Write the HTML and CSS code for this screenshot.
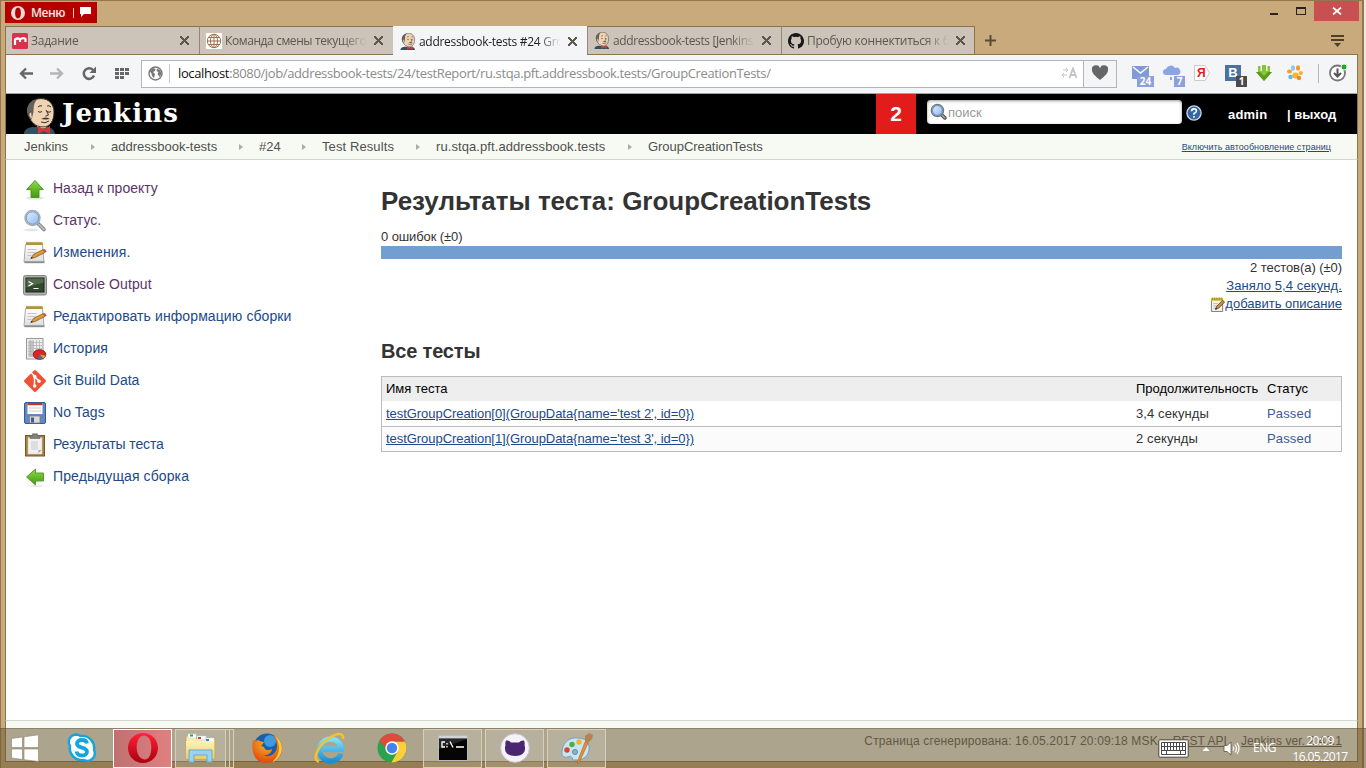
FILE: index.html
```html
<!DOCTYPE html>
<html lang="ru">
<head>
<meta charset="utf-8">
<title>GroupCreationTests [Jenkins]</title>
<link rel="stylesheet" href="styles.css">
</head>
<body>
<svg class="defs" width="0" height="0">
  <defs>
    <linearGradient id="green" x1="0" y1="0" x2="0" y2="1"><stop offset="0" stop-color="#8fdc45"/><stop offset="1" stop-color="#3f9a10"/></linearGradient>
    <linearGradient id="paper" x1="0" y1="0" x2="0" y2="1"><stop offset="0" stop-color="#fff"/><stop offset="1" stop-color="#dcdcdc"/></linearGradient>
    <linearGradient id="lens" x1="0" y1="0" x2="1" y2="1"><stop offset="0" stop-color="#eaf4ff"/><stop offset="1" stop-color="#86b4ea"/></linearGradient>
    <linearGradient id="opera" x1="0" y1="0" x2="0" y2="1"><stop offset="0" stop-color="#ff2238"/><stop offset="1" stop-color="#a9000f"/></linearGradient>
    <linearGradient id="ie" x1="0" y1="0" x2="0" y2="1"><stop offset="0" stop-color="#7fe0fb"/><stop offset="1" stop-color="#1b8fd6"/></linearGradient>
    <linearGradient id="folder" x1="0" y1="0" x2="0" y2="1"><stop offset="0" stop-color="#fff3ba"/><stop offset="1" stop-color="#eccb64"/></linearGradient>
    <radialGradient id="fox" cx=".5" cy=".3" r=".7"><stop offset="0" stop-color="#ffb627"/><stop offset="1" stop-color="#dc4a10"/></radialGradient>
    <symbol id="butler" viewBox="0 0 32 36">
      <path d="M0 36c0-4 3-6 8-7h16c4 1 6 3 7 7z" fill="#335061"/>
      <path d="M9 25l7 6 5-1 5-4-2-4H11z" fill="#fff"/>
      <path d="M4 14C3 5 10 .6 17 .6c8 0 13 6 13 13.400 0 9-4 15-11 15C11 29 5 23 4 14z" fill="#efd3b3" stroke="#33302c" stroke-width="1"/>
      <path d="M4 18C1 9 5 3 13 1.500 9 6 10 10 9.500 14L8 20c-2 0-3-1-4-2z" fill="#67625f"/>
      <path d="M7 14c-3 0-3 6 1 7" fill="#efd3b3" stroke="#33302c" stroke-width=".8"/>
      <path d="M14 9q2-2 4-1M23 8q2-1 4 1M14 13.500q2 1.500 4 0M23 13.500q2 1.500 4 0M22 12l2.500 5-3 1.200M17 24q4 2 8-1" fill="none" stroke="#33302c" stroke-width="1"/>
      <path d="M17 21q5-3 9 0l-4 .6z" fill="#3a322c"/>
      <path d="M14 28l6 3 6-3v8l-6-3-6 3z" fill="#d33833"/>
    </symbol>
    <symbol id="i-up" viewBox="0 0 24 24"><ellipse cx="12" cy="21" rx="9" ry="1.600" fill="#e4e4e4"/><path d="M12 3.500l8.300 9H16V20.500H8v-8H3.700z" fill="url(#green)" stroke="#4a9a22"/></symbol>
    <symbol id="i-left" viewBox="0 0 24 24"><ellipse cx="13" cy="21" rx="8" ry="1.200" fill="#eaeaea"/><path d="M3.500 12l9-8v4H20.500v8h-8v4z" fill="url(#green)" stroke="#5a9a35"/></symbol>
    <symbol id="i-search" viewBox="0 0 24 24"><ellipse cx="8" cy="21" rx="7" ry="1.500" fill="#e6e6e6"/><path d="M15 14.500l6 6" stroke="#777" stroke-width="3.600" stroke-linecap="round"/><path d="M16 15.500l5 5" stroke="#bbb" stroke-width="2" stroke-linecap="round"/><circle cx="9.500" cy="9" r="7.500" fill="url(#lens)" stroke="#a9adb3" stroke-width="1.500"/><circle cx="9.500" cy="9" r="6.200" fill="none" stroke="#6f97cb" stroke-width=".9"/></symbol>
    <symbol id="i-lens" viewBox="0 0 16 16"><path d="M10.500 10.500l3.500 3.500" stroke="#555" stroke-width="3.400" stroke-linecap="round"/><path d="M11.500 11.500l2.300 2.300" stroke="#aaa" stroke-width="1.400" stroke-linecap="round"/><circle cx="7" cy="7" r="5.800" fill="url(#lens)" stroke="#777" stroke-width="1.200"/><circle cx="7" cy="7" r="4.600" fill="none" stroke="#4f7fc0" stroke-width=".9"/></symbol>
    <symbol id="i-note" viewBox="0 0 24 24"><path d="M2.500 3.500h17l1.500 17.500h-20z" fill="url(#paper)" stroke="#aaa"/><path d="M1.500 21.300h20" stroke="#8d8d8d" stroke-width="1.800"/><path d="M3 1.500h17v2.600H3z" fill="#c6a64a"/><path d="M4 .8v3m2-3v3m2-3v3m2-3v3m2-3v3m2-3v3m2-3v3m2-3v3" stroke="#8a6f24" stroke-width=".8"/><path d="M4.500 8.500h9m-9 3h8m-8 3h4" stroke="#c4c4c4"/><path d="M8 17.500l2.500-4.200 9.800-4.800 1.700 3-10 5z" fill="#d99a3a" stroke="#7d5217" stroke-width=".7"/><path d="M20 8.700l2-.8 1.700 2.800-2 .8z" fill="#d94b45"/><path d="M7.300 17.800l1.500-2 .9 1.300z" fill="#222"/></symbol>
    <symbol id="i-edit" viewBox="0 0 16 16"><path d="M1.500 2.500h12v13h-12z" fill="#f1f1ee" stroke="#777"/><path d="M1 1h13v3H1z" fill="#e3c437"/><path d="M2.500 .5v3m2-3v3m2-3v3m2-3v3m2-3v3m2-3v3" stroke="#8a6f24" stroke-width=".8"/><path d="M3.500 7h5m-5 2.500h4m-4 2.500h2" stroke="#bbb"/><path d="M6 13l1-3 6.500-6.500 2 2L9 12z" fill="#c98f3a" stroke="#4d3613" stroke-width=".8"/><path d="M5.500 13.500l.7-2 1.300 1.300z" fill="#111"/></symbol>
    <symbol id="i-term" viewBox="0 0 24 24"><rect x=".5" y="2.500" width="23" height="19.500" rx="2" fill="#aeb3ad" stroke="#858585"/><rect x="3" y="5" width="18" height="14" fill="#31492c" stroke="#182415"/><path d="M3.500 5.500h17v4l-17 5z" fill="#526a49"/><path d="M5.500 8.500l4 2.300-4 2.300M10.500 15.500h5" fill="none" stroke="#fff" stroke-width="1.200"/></symbol>
    <symbol id="i-hist" viewBox="0 0 24 24"><rect x="3.500" y="1.500" width="16.500" height="20.500" fill="#ededed" stroke="#999"/><path d="M5.500 3.500h4.500v16.500H5.500z" fill="#c4c4c4"/><path d="M5 5.500h14m-14 3h14m-14 3h14m-14 3h14m-14 3h10M7.500 3v17m3-17v17m3-17v17m3-17v12" stroke="#b4b4b4" stroke-width=".8"/><ellipse cx="16.500" cy="17.500" rx="6.300" ry="4.800" fill="#d92525" stroke="#a11b1b"/><path d="M17 17.500l-2.500 4.300q3 .8 5 0z" fill="#3b6fb5"/><path d="M17 17.500l3 4q2-1 2.500-3z" fill="#b9b226"/></symbol>
    <symbol id="i-git" viewBox="0 0 24 24"><rect x="3.800" y="3.800" width="16.400" height="16.400" rx="1.500" transform="rotate(45 12 12)" fill="#f05133"/><path d="M8.500 4l3 3.200v10M12 8l4 4" fill="none" stroke="#fff" stroke-width="1.500"/><circle cx="11.700" cy="7.600" r="1.800" fill="#fff"/><circle cx="11.700" cy="17" r="1.800" fill="#fff"/><circle cx="16" cy="12.200" r="1.800" fill="#fff"/></symbol>
    <symbol id="i-floppy" viewBox="0 0 24 24"><rect x="1.500" y="1.500" width="21" height="21" rx="1.500" fill="#6289c4" stroke="#37598f"/><rect x="4.500" y="2" width="15" height="11" fill="#fff"/><rect x="4.500" y="2" width="15" height="2.200" fill="#cc2f2f"/><path d="M6 7h12M6 10h12" stroke="#ccc"/><rect x="6.500" y="15" width="10.500" height="7" fill="#d9d9d9" stroke="#777" stroke-width=".7"/><rect x="8" y="16.500" width="3" height="5" fill="#3f5e8f"/></symbol>
    <symbol id="i-clip" viewBox="0 0 24 24"><rect x="2.500" y="2.500" width="19" height="20.500" fill="#ab7d35" stroke="#7b5720"/><path d="M5 4.500h14V21H5z" fill="#f1f1f1" stroke="#ccc" stroke-width=".6"/><path d="M8 8h7v9H8z" fill="#dedede"/><path d="M14.500 21q1.500-1 1-4 2 .8 3.500-.5z" fill="#999"/><path d="M7 2.500h2.500V.8h5v1.700H17v3H7z" fill="#7c8078" stroke="#666" stroke-width=".6"/></symbol>
  </defs>
</svg>

<div class="desktop">
<div class="window">
  <div class="titlebar">
    <div class="menu">
      <svg width="14" height="14" viewBox="0 0 14 14"><path fill-rule="evenodd" d="M7 0a7 7 0 1 0 0 14A7 7 0 0 0 7 0zm0 1.500c1.900 0 2.900 2.300 2.900 5.500S8.900 12.500 7 12.500 4.100 10.200 4.100 7 5.100 1.500 7 1.500z" fill="#f3d9d9"/></svg>
      <span class="menu-text">Меню</span><i class="menu-sep"></i>
      <svg width="11" height="10" viewBox="0 0 11 10"><path d="M0 0h11v7H4L1 10V7H0z" fill="#fff"/></svg>
    </div>
    <div class="controls">
      <i class="ctl-min"></i><i class="ctl-max"></i>
      <span class="ctl-close"><svg width="10" height="8" viewBox="0 0 10 8"><path d="M1 .5l8 7M9 .5l-8 7" stroke="#fff" stroke-width="1.700"/></svg></span>
    </div>
  </div>

  <div class="tabs">
    <div class="tab first"><svg width="16" height="16" viewBox="0 0 16 16"><rect width="16" height="16" rx="1.500" fill="#d8324c"/><path d="M3 12V6.500q3-2 5 0V9M8 6.500q3-2.500 5.500-.5V9" fill="none" stroke="#fff" stroke-width="2.200"/></svg><span class="t1">Задание</span><b class="x"></b></div>
    <div class="tab"><svg width="16" height="16" viewBox="0 0 16 16"><rect width="16" height="16" fill="#fff"/><g fill="none" stroke="#a3704a"><circle cx="8" cy="8" r="6.700"/><ellipse cx="8" cy="8" rx="3.500" ry="6.700"/><path d="M8 1v14M1 8h14M2.500 4.500h11M2.500 11.500h11"/></g></svg><span class="t2">Команда смены текущего</span><b class="x"></b></div>
    <div class="tab active"><svg width="16" height="17"><use href="#butler"/></svg><span class="t3">addressbook-tests #24 Gro</span><b class="x"></b></div>
    <div class="tab"><svg width="16" height="17"><use href="#butler"/></svg><span class="t4">addressbook-tests [Jenkins</span><b class="x"></b></div>
    <div class="tab last"><svg width="16" height="16" viewBox="0 0 16 16"><path fill="#1a1817" d="M8 0C3.580 0 0 3.580 0 8c0 3.540 2.290 6.530 5.470 7.590.4.070.55-.17.55-.38 0-.19-.01-.82-.01-1.490-2.010.37-2.530-.49-2.690-.94-.09-.23-.48-.94-.82-1.130-.28-.15-.68-.52-.01-.53.63-.01 1.080.58 1.230.82.72 1.210 1.870.87 2.330.66.07-.52.28-.87.51-1.070-1.780-.2-3.640-.89-3.640-3.950 0-.87.31-1.590.82-2.150-.08-.2-.36-1.020.08-2.120 0 0 .67-.21 2.200.82a7.400 7.400 0 0 1 4 0c1.530-1.040 2.200-.82 2.200-.82.44 1.100.16 1.920.08 2.120.51.56.82 1.270.82 2.150 0 3.070-1.870 3.750-3.650 3.950.29.25.54.73.54 1.480 0 1.070-.01 1.930-.01 2.200 0 .21.15.46.55.38A8 8 0 0 0 8 0z"/></svg><span class="t5">Пробую коннектиться к б</span><b class="x"></b></div>
    <svg class="plus" width="11" height="11"><path d="M5.500 0v11M0 5.500h11" stroke="#5a4a30" stroke-width="2"/></svg>
    <svg class="tabmenu" width="13" height="12"><path d="M0 1h13M0 5h13" stroke="#4d3f28" stroke-width="1.800"/><path d="M3 8h7l-3.500 4z" fill="#4d3f28"/></svg>
  </div>

  <div class="toolbar">
    <svg class="nav" width="112" height="16" viewBox="0 0 112 16">
      <path d="M14 7.500H2M7 2.500l-5 5 5 5" fill="none" stroke="#666" stroke-width="2.300"/>
      <path d="M31 7.500h12M38 2.500l5 5-5 5" fill="none" stroke="#b4b4b4" stroke-width="2.300"/>
      <path d="M74 4A5.300 5.300 0 1 0 75 9.500" fill="none" stroke="#666" stroke-width="2.500"/><path d="M77 .5V7h-6.500z" fill="#666"/>
      <g fill="#666"><path d="M96 2h4v3h-4zM101 2h4v3h-4zM106 2h4v3h-4zM96 6h4v3h-4zM101 6h4v3h-4zM106 6h4v3h-4zM96 10h4v3h-4zM101 10h4v3h-4z"/></g>
    </svg>
    <div class="address">
      <svg width="15" height="15" viewBox="0 0 15 15"><circle cx="7.500" cy="7.500" r="6.500" fill="#fff" stroke="#777" stroke-width="1.400"/><path d="M1.500 5l3.500-3 2.500 1-.5 2-2 1 2 2-1 4-2-2-.5-2.500zM9 2.500l3.500 2 .8 3.500-1.500 3-2.300-3 1-2-2-1z" fill="#777"/></svg>
      <i class="addr-sep"></i>
      <span class="url"><span class="host">localhost</span>:8080/job/addressbook-tests/24/testReport/ru.stqa.pft.addressbook.tests/GroupCreationTests/</span>
      <svg class="translate" width="16" height="12" viewBox="0 0 16 12"><path d="M8.500 11L12 1.500 15.500 11M9.500 8h5" fill="none" stroke="#c4c4c4" stroke-width="1.800"/><path d="M2 3h5M5 1l2 2-2 2M6 8H1M3 6L1 8l2 2" fill="none" stroke="#c4c4c4"/></svg>
    </div>
    <div class="heart"><svg width="18" height="16" viewBox="0 0 18 16"><path d="M9 15C4 11 1 8 1 5a4 4 0 0 1 8-1.500A4 4 0 0 1 17 5c0 3-3 6-8 10z" fill="#666"/></svg></div>
    <div class="exts">
      <div class="ext e1"><svg width="18" height="14" viewBox="0 0 18 14"><rect width="17" height="13" fill="#8199d8"/><path d="M1 1l7.500 6L16 1" fill="none" stroke="#fff" stroke-width="1.500"/></svg><span class="badge">24</span></div>
      <div class="ext e2"><svg width="18" height="16" viewBox="0 0 18 16"><path d="M3 10a3 3 0 0 1 0-6 5 5 0 0 1 9-1 3.500 3.500 0 0 1 3 7z" fill="#8ba5e4"/><path d="M8 12v3" stroke="#8ba5e4" stroke-width="2"/></svg><span class="badge">7</span></div>
      <div class="ext e3"><svg width="16" height="16" viewBox="0 0 16 16"><path d="M.5.500H11L15.500 8 11 15.500H.500z" fill="#fff" stroke="#ccc"/></svg><span class="ya">Я</span></div>
      <div class="ext e4"><span class="vk">B</span><span class="badge dark">1</span></div>
      <div class="ext e5"><svg width="16" height="16" viewBox="0 0 16 16"><path d="M2 1h2.500v5H6V0h4v6h1.500V1H14v6h2l-8 9-8-9h2z" fill="#8bc43a"/><path d="M8 16l8-9h-4l-4 4-4-4H0z" fill="#5a9d1b"/></svg></div>
      <div class="ext e6"><svg width="16" height="16" viewBox="0 0 16 16"><ellipse cx="8.500" cy="10.500" rx="3.200" ry="3" fill="#f5b335"/><ellipse cx="2.500" cy="6.500" rx="2.500" ry="2" fill="#f5a020"/><ellipse cx="6" cy="3" rx="2" ry="2.800" fill="#8cc8ee"/><ellipse cx="11" cy="3" rx="2" ry="2.800" fill="#f29b27"/><ellipse cx="13.800" cy="8" rx="2.200" ry="1.900" fill="#f5b335"/><circle cx="3.500" cy="12" r="2.200" fill="#62b6e8"/><circle cx="12" cy="13" r="2.200" fill="#ef8a2c"/></svg></div>
      <i class="ext-sep"></i>
      <div class="ext e7"><svg width="19" height="19" viewBox="0 0 19 19"><circle cx="8.500" cy="10" r="7.500" fill="#fff" stroke="#777" stroke-width="1.800"/><path d="M8.500 5.500v8M5 10l3.500 3.500L12 10" fill="none" stroke="#555" stroke-width="2"/><circle cx="15" cy="4" r="3" fill="#15b01a" stroke="#f4f5f7"/></svg></div>
    </div>
  </div>

  <header class="jheader">
    <svg class="jlogo" width="32" height="36"><use href="#butler"/></svg>
    <span class="jname">Jenkins</span>
    <span class="alerts">2</span>
    <div class="search"><svg width="17" height="17"><use href="#i-lens"/></svg><span>поиск</span></div>
    <span class="help"><svg width="16" height="16" viewBox="0 0 14 14"><circle cx="7" cy="7" r="6.200" fill="#3465a4" stroke="#c9d8ea" stroke-width="1.200"/><path d="M4.900 5.500q0-2.100 2.100-2.100t2.100 1.800Q9.100 6.500 7 7.500v1M7 9.700v1.500" fill="none" stroke="#fff" stroke-width="1.400"/></svg></span>
    <b class="user">admin</b><b class="logout">| выход</b>
  </header>

  <nav class="crumbs">
    <span class="c1">Jenkins</span><span class="c2">addressbook-tests</span><span class="c3">#24</span><span class="c4">Test Results</span><span class="c5">ru.stqa.pft.addressbook.tests</span><span class="c6">GroupCreationTests</span>
    <a class="auto">Включить автообновление страниц</a>
  </nav>

  <main class="page">
    <aside class="side">
      <a class="visited"><svg><use href="#i-up"/></svg><span class="tight">Назад к проекту</span></a>
      <a class="visited"><svg><use href="#i-search"/></svg><span class="tight">Статус.</span></a>
      <a><svg><use href="#i-note"/></svg><span>Изменения.</span></a>
      <a class="visited"><svg><use href="#i-term"/></svg><span>Console Output</span></a>
      <a><svg><use href="#i-note"/></svg><span>Редактировать информацию сборки</span></a>
      <a><svg><use href="#i-hist"/></svg><span>История</span></a>
      <a><svg><use href="#i-git"/></svg><span class="tight">Git Build Data</span></a>
      <a><svg><use href="#i-floppy"/></svg><span>No Tags</span></a>
      <a><svg><use href="#i-clip"/></svg><span class="tighter">Результаты теста</span></a>
      <a><svg><use href="#i-left"/></svg><span>Предыдущая сборка</span></a>
    </aside>
    <section class="content">
      <h1>Результаты теста: GroupCreationTests</h1>
      <div class="fails">0 ошибок (±0)</div>
      <div class="bar"></div>
      <div class="summary">
        <span class="total">2 тестов(а) (±0)</span>
        <a class="took">Заняло 5,4 секунд.</a>
        <div class="desc"><svg width="15" height="15"><use href="#i-edit"/></svg><a>добавить описание</a></div>
      </div>
      <h2>Все тесты</h2>
      <div class="table">
        <div class="row head"><span>Имя теста</span><span>Продолжительность</span><span>Статус</span></div>
        <div class="row"><span><a>testGroupCreation[0](GroupData{name='test 2', id=0})</a></span><span class="dur">3,4 секунды</span><span class="pass">Passed</span></div>
        <div class="row alt"><span><a>testGroupCreation[1](GroupData{name='test 3', id=0})</a></span><span class="dur">2 секунды</span><span class="pass">Passed</span></div>
      </div>
    </section>
  </main>

  <footer class="foot"><span class="f1">Страница сгенерирована: 16.05.2017 20:09:18 MSK</span><a class="f2">REST API</a><a class="f3">Jenkins ver. 2.46.1</a></footer>
</div>

<div class="taskbar">
  <div class="task start"><svg width="28" height="28" viewBox="0 0 28 28"><path d="M.5 4.500L11.500 3v10.500H.5zM13 2.800L27.500.800v12.700H13zM.5 15h11v10.500L.5 24zM13 15h14.500v12.500L13 25.700z" fill="#fff" stroke="#8d8064" stroke-width=".6"/></svg></div>
  <div class="task skype"><svg width="30" height="30" viewBox="0 0 30 30"><path d="M9 1.500a7.500 7.500 0 0 0-6 11.500 12 12 0 0 0 14 14 7.500 7.500 0 0 0 10-10A12 12 0 0 0 13.500 3 7.500 7.500 0 0 0 9 1.500z" fill="#fff" stroke="#12a5e0" stroke-width="2.400"/><path d="M20 10.500c-.5-2.500-2.500-3.500-5-3.500-3 0-5 1.500-5 3.700 0 5 10 2.800 10 8 0 2.300-2 3.800-5 3.800s-5-1.500-5.500-4" fill="none" stroke="#12a5e0" stroke-width="3.800"/></svg></div>
  <div class="task btn red"><svg width="30" height="30" viewBox="0 0 30 30"><path fill-rule="evenodd" d="M15 0C6.500 0 0 6.700 0 15s6.500 15 15 15 15-6.700 15-15S23.500 0 15 0zm1 2.500c4.600 0 7.300 5 7.300 11.500 0 7.500-2.300 12.500-6.300 12.500-4.600 0-8.300-5-8.300-12 0-7.500 3.300-12 7.300-12z" fill="url(#opera)"/></svg></div>
  <div class="task btn files"><svg width="32" height="30" viewBox="0 0 32 30"><path d="M1 3h9l2 3h18v20H1z" fill="url(#folder)" stroke="#c8a54d"/><path d="M3 1h8v4H3zM12 3h9v4h-9zM20 5h9v4h-9z" fill="#fff" stroke="#ccc" stroke-width=".5"/><path d="M5 1.500h3v2H5z" fill="#2fa348"/><path d="M13 4h3v2h-3z" fill="#d6452e"/><path d="M21 6h3v2h-3z" fill="#2b88d8"/><path d="M1 8h28v18H1z" fill="url(#folder)"/><path d="M4 29V17h23v12h-5v-7H9v7z" fill="#9bd3ee" stroke="#65a9cd"/></svg></div>
  <i class="stack"></i><i class="stack s2"></i>
  <div class="task fx"><svg width="32" height="32" viewBox="0 0 32 32"><circle cx="16" cy="15" r="13.500" fill="#1b5fa8"/><circle cx="19" cy="9" r="6" fill="#3f9ae0"/><path d="M2 8c1 1 3 1 5 0 2 1 4 2 6 2l-3 4c2 0 3 1 4 3 2 2 5 1 7 0 0 4-5 7-9 6 5 3 14 0 14-9 0-6-2-9-4-11 7 3 10 9 9 15-1 9-8 13-15 13C6 31-1 23 2 8z" fill="url(#fox)"/><path d="M24 4c6 4 8 11 6 17-2 5-5 8-9 9 5-4 7-9 7-14 0-6-2-9-4-12z" fill="#ffd23c"/></svg></div>
  <div class="task iex"><svg width="32" height="32" viewBox="0 0 32 32"><path d="M27 21.500A11 11 0 1 1 27.500 17H9" fill="none" stroke="url(#ie)" stroke-width="5.500"/><path d="M5 29.500C-3 28 5 12 16 5.500c7-4.500 14-5.500 13 1.500" fill="none" stroke="#f3c22d" stroke-width="2.600"/></svg></div>
  <div class="task chrome"><svg width="30" height="30" viewBox="0 0 30 30"><circle cx="15" cy="15" r="14.500" fill="#2ba24c"/><path d="M15 8.500h12.900A14.500 14.500 0 0 1 14.500 29.500L21 18z" fill="#fdd03b"/><path d="M2.400 7.700A14.500 14.500 0 0 1 27.900 8.500H15l-6 7z" fill="#dd4b3e"/><circle cx="15" cy="15" r="6.700" fill="#fff"/><circle cx="15" cy="15" r="5.200" fill="#4483ee"/></svg></div>
  <div class="task btn cmd"><svg width="30" height="26" viewBox="0 0 30 26"><rect x=".5" y=".5" width="29" height="25" fill="#050505" stroke="#bbb"/><path d="M1 1h28v2.500H1z" fill="#cfd4d8"/><path d="M1 14V4h28z" fill="#262626"/><path d="M7 7H4v5h3M9 8v1.500M9 11v1.500M12 6.500l3 6M18 12h8" fill="none" stroke="#fff" stroke-width="1.300"/></svg></div>
  <div class="task btn gh"><svg width="30" height="30" viewBox="0 0 30 30"><circle cx="15" cy="15" r="14.300" fill="#f6f2fa" stroke="#cfc6da"/><path d="M6 7.500q3-.5 5 2h8Q21 7 24 7.500q1 2 .5 4.500 1.500 5-1 8Q21 23 15 23t-8.500-3q-2.500-3-1-8Q5 9.500 6 7.500z" fill="#4a2670"/></svg></div>
  <div class="task btn paint"><svg width="34" height="32" viewBox="0 0 34 32"><path d="M2 19C3 10 10 5 18 6c8 0 12 5 11 12-1 6-5 9-10 10H13c-1-3-2-5-5-3-4 1-7-1-6-6z" fill="#c9e5f2" stroke="#6fa3bd"/><circle cx="7" cy="18" r="2.700" fill="#d8432f"/><circle cx="12" cy="12.500" r="2.700" fill="#4cae45"/><circle cx="19" cy="10" r="2.700" fill="#f0b52c"/><circle cx="15" cy="20" r="2.500" fill="#8fb1c4" stroke="#5d8ba3"/><path d="M17 31l8-21 3 1-9 20z" fill="#e69138" stroke="#a85d17" stroke-width=".6"/><path d="M25 10l0-6 4-3 4 2-1 4-4 4z" fill="#b98152"/></svg></div>
  <div class="tray">
    <svg class="kbd" width="31" height="19" viewBox="0 0 31 19"><rect x=".8" y=".8" width="29.400" height="17.400" rx="1" fill="#fff" stroke="#4c4433"/><path d="M3.500 3.500h24v12h-24zM3.500 7.500h24M3.500 11.500h24M6.500 3.500v8M9.500 3.500v8M12.500 3.500v8M15.500 3.500v8M18.500 3.500v8M21.500 3.500v8M24.500 3.500v8M8.500 11.500v4M22.500 11.500v4" fill="none" stroke="#4a4a4a"/></svg>
    <svg class="tri" width="10" height="6"><path d="M.5 5.500h9L5 .5z" fill="#fff" stroke="#6d614a" stroke-width=".4"/></svg>
    <svg class="vol" width="17" height="15" viewBox="0 0 17 15"><path d="M1 4.500h3L8 1v13L4 10.500H1z" fill="#fff" stroke="#5d523c" stroke-width=".8"/><path d="M10 5.500q1.500 2 0 4M12 3.500q3 4 0 8M14 2q4 5.500 0 11" fill="none" stroke="#fff" stroke-width="1.200"/></svg>
    <span class="lang">ENG</span>
    <div class="clock"><span>20:09</span><span class="date">16.05.2017</span></div>
  </div>
</div>
</div>
</body>
</html>
```

FILE: styles.css
```css
* { box-sizing: border-box; }
body { margin: 0; background: #ece9e6; overflow: hidden; font-family: "Liberation Sans", Arial, sans-serif; }
.defs { position: absolute; }
svg { display: block; flex: none; }
.desktop { position: relative; width: 1366px; height: 768px; overflow: hidden; }
.window { width: 1364px; height: 768px; display: flex; flex-direction: column; background: #c8aa7c; border-top: 1px solid #94774c; border-left: 1px solid #94774c; border-right: 2px solid #94774c; padding: 0 4px 6px; white-space: nowrap; }

.titlebar { height: 25px; display: flex; justify-content: space-between; }
.menu { width: 92px; height: 21px; margin-top: 1px; background: #b50000; display: flex; align-items: center; padding-left: 6px; }
.menu-text { font: 600 12px/20px "Open Sans", sans-serif; color: #f7e6e6; margin-left: 6px; width: 42px; letter-spacing: -.5px; }
.menu-sep { width: 1px; height: 10px; background: #f0caca; margin-right: 6px; }
.menu svg:last-child { margin-bottom: 2px; }
.controls { display: flex; margin-right: -1px; }
.ctl-min { width: 8px; height: 2px; background: #2c2418; margin: 12px 18px 0 0; }
.ctl-max { width: 10px; height: 8px; border: 1px solid #2c2418; border-top-width: 2px; margin: 6px 8px 0 0; }
.ctl-close { width: 45px; height: 20px; background: #c75050; display: flex; align-items: center; justify-content: center; }

.tabs { height: 29px; display: flex; border-bottom: 1px solid #8d734c; border-left: 1px solid #8d734c; }
.tab { width: 194px; height: 28px; background: #cdc4b9; border-top: 1px solid #8d734c; border-left: 1px solid #948778; display: flex; align-items: center; padding: 0 8px 0 6px; color: #5c5751; font: 12px/28px "Open Sans", "Noto Sans", sans-serif; letter-spacing: -.25px; }
.tab.first { border-left: 0; width: 193px; }
.tab.last { border-right: 1px solid #8d734c; }
.tab.active { background: #f4f5f7; color: #1c1c1c; height: 29px; border-top-color: #f4f5f7; border-left-color: #f4f5f7; }
.tab span { width: 142px; margin: 1px 0 0 3px; overflow: hidden; -webkit-mask-image: linear-gradient(90deg, #000 118px, transparent 142px); }
.tab .t2 { letter-spacing: -.4px; }
.tab .t3 { letter-spacing: -.3px; }
.tab .t4 { letter-spacing: -.38px; }
.tab .t5 { letter-spacing: -.28px; }
.x { width: 9px; height: 9px; flex: none; margin: 0 0 0 7px; background: linear-gradient(45deg, transparent 41%, #5d5851 41%, #5d5851 59%, transparent 59%), linear-gradient(-45deg, transparent 41%, #5d5851 41%, #5d5851 59%, transparent 59%); }
.plus { margin: 9px 0 0 10px; }
.tabmenu { margin: 9px 14px 0 auto; }

.toolbar { height: 39px; background: #f4f5f7; border-bottom: 1px solid #a4a4a4; display: flex; align-items: flex-start; border-left: 1px solid #8d734c; border-right: 1px solid #8d734c; padding-top: 5px; }
.nav { margin: 6px 0 0 13px; width: 112px; }
.address { width: 943px; height: 28px; margin-left: 10px; border: 1px solid #b3b5b9; background: #fff; display: flex; align-items: center; padding: 0 6px 2px 6px; }
.addr-sep { width: 1px; height: 19px; background: #c4c4c4; margin: 0 8px 0 6px; }
.url { flex: 1; font: 13px/24px "Open Sans", sans-serif; color: #8b8b8b; letter-spacing: -.37px; }
.host { color: #111; }
.heart { width: 33px; height: 28px; border: 1px solid #b3b5b9; border-left: 0; display: flex; align-items: center; justify-content: center; padding-bottom: 2px; }
.exts { flex: 1; display: flex; height: 28px; padding-left: 15px; }
.ext { position: relative; height: 28px; padding-top: 5px; }
.e1 { width: 31px; padding-top: 6px; } .e2 { width: 31px; } .e3 { width: 31px; } .e4 { width: 31px; } .e5 { width: 31px; } .e6 { width: 31px; }
.badge { position: absolute; left: 5px; top: 16px; width: 17px; height: 11px; background: #8ba0dc; color: #fff; font: 700 10px/11px "Open Sans", sans-serif; text-align: center; }
.e2 .badge { left: 11px; width: 11px; }
.badge.dark { left: 11px; width: 11px; background: #4b4b4b; }
.ya { position: absolute; left: 3px; top: 6px; font: 700 12px/14px "Liberation Sans", sans-serif; color: #e02020; }
.vk { display: block; width: 16px; height: 16px; background: #4b729e; color: #fff; font: 700 13px/16px "Liberation Sans", sans-serif; text-align: center; }
.ext-sep { width: 1px; height: 19px; margin-top: 4px; background: #b9b9b9; }
.e7 { margin-left: 10px; padding-top: 3px; }

.jheader { height: 40px; background: #000; border-left: 1px solid #8d734c; border-right: 1px solid #8d734c; display: flex; color: #fff; overflow: hidden; }
.jlogo { margin: 4px 0 0 18px; }
.jname { font: 700 26px/39px "DejaVu Serif", "Liberation Serif", serif; width: 814px; margin-left: 6px; letter-spacing: 1.1px; }
.alerts { width: 40px; background: #e21b1b; font: 700 21px/40px "Liberation Sans", sans-serif; text-align: center; }
.search { width: 255px; height: 24px; margin: 6px 0 0 11px; border-radius: 4px; background: #fff; box-shadow: inset 0 1px 3px #999; display: flex; align-items: center; padding-left: 3px; color: #999; font-size: 13px; gap: 1px; }
.search svg { margin-bottom: 1px; }
.help { margin: 11px 0 0 4px; width: 16px; }
.user, .logout { font-size: 13px; line-height: 41px; }
.user { margin-left: 26px; width: 59px; letter-spacing: .2px; }

.crumbs { height: 26px; background: #f7faf3; border: 1px solid #8d734c; border-top: 0; border-bottom-color: #d3d7cf; display: flex; font-size: 13px; line-height: 25px; padding-left: 18px; }
.crumbs span { color: #505050; position: relative; }
.crumbs span:not(:nth-child(6))::after { content: ""; position: absolute; right: 16px; top: 10px; border-left: 4px solid #aaa; border-top: 3.500px solid transparent; border-bottom: 3.500px solid transparent; }
.c1 { width: 87px; } .c2 { width: 148px; } .c3 { width: 63px; } .c4 { width: 114px; letter-spacing: .1px; } .c5 { width: 212px; letter-spacing: .08px; }
.c6 { letter-spacing: -.05px; }
.auto { margin-left: auto; margin-right: 26px; color: #204a87; text-decoration: underline; font-size: 9px; line-height: 26px; letter-spacing: .05px; }

.page { height: 560px; background: #fff; border-left: 1px solid #8d734c; border-right: 1px solid #8d734c; display: flex; }
.side { width: 375px; padding: 12px 0 0 17px; }
.side a { height: 32px; display: flex; align-items: center; gap: 6px; color: #204a87; font-size: 14px; letter-spacing: .1px; }
.side svg { width: 24px; height: 24px; margin-top: 1px; }
.side .visited { color: #5c3566; }
.side .tight { letter-spacing: 0; }
.side .tighter { letter-spacing: -.12px; }
.content { width: 961px; color: #333; font-size: 13px; }
h1 { margin: 22px 0 0; font-size: 26px; line-height: 38px; letter-spacing: -.02px; }
.fails { margin-top: 7px; height: 19px; line-height: 19px; letter-spacing: -.1px; }
.bar { height: 13px; background: #729fcf; }
.summary { display: flex; flex-direction: column; align-items: flex-end; line-height: 18px; height: 72px; }
.content a { color: #204a87; text-decoration: underline; }
.content .took { letter-spacing: .1px; }
.total { letter-spacing: -.06px; }
.desc { display: flex; align-items: flex-start; height: 18px; }
.desc svg { margin-top: 2px; }
h2 { margin: 8px 0 0; font-size: 20px; line-height: 24px; letter-spacing: -.18px; }
.table { border: 1px solid #bbb; margin-top: 13px; }
.row { display: grid; grid-template-columns: 750px 131px 1fr; padding-left: 4px; height: 25px; line-height: 24px; border-top: 1px solid #bbb; }
.row a { letter-spacing: -.05px; }
.row.head { background: #eee; color: #000; border-top: 0; height: 24px; }
.row.head + .row { border-top-color: #fff; }
.dur { letter-spacing: .1px; }
.alt { background: #fbfbfb; }
.pass { color: #3b5998; letter-spacing: .15px; }

.foot { height: 42px; background: #f7faf3; border: 1px solid #8d734c; border-top-color: #d3d7cf; display: flex; justify-content: flex-end; padding-right: 15px; color: #5c5c5c; font-size: 12px; line-height: 40px; }
.f1 { letter-spacing: .14px; }
.foot a { text-decoration: underline; letter-spacing: .05px; }
.f2 { margin: 0 14px 0 15px; }

.taskbar { position: absolute; left: 0; top: 728px; width: 1366px; height: 40px; background: rgba(104, 84, 48, .52); border-top: 1px solid rgba(80, 70, 40, .35); display: flex; white-space: nowrap; }
.task { height: 39px; display: flex; align-items: center; justify-content: center; flex: none; padding-bottom: 2px; }
.start { width: 50px; } .skype { width: 63px; }
.btn { width: 59px; border: 1px solid #d8ceb9; background: rgba(255,255,255,.14); margin-right: 3px; }
.red { background: linear-gradient(90deg, #c07070, #e08080); border-color: #fff; margin-right: 3px; }
.files { width: 51px; margin-right: 0; }
.stack { width: 4px; border: 1px solid #d8ceb9; border-left: 0; }
.fx { width: 63px; margin-left: 1px; } .iex { width: 63px; } .chrome { width: 62px; }
.tray { margin-left: auto; display: flex; color: #fff; font: 12px/16px "Open Sans", sans-serif; width: 208px; }
.kbd { margin-top: 10px; }
.tri { margin: 17px 0 0 12px; }
.vol { margin: 12px 0 0 12px; }
.lang { margin: 11px 0 0 13px; width: 24px; letter-spacing: -.5px; }
.clock { margin: 4px 0 0 12px; width: 62px; display: flex; flex-direction: column; align-items: center; letter-spacing: -.6px; }
```
